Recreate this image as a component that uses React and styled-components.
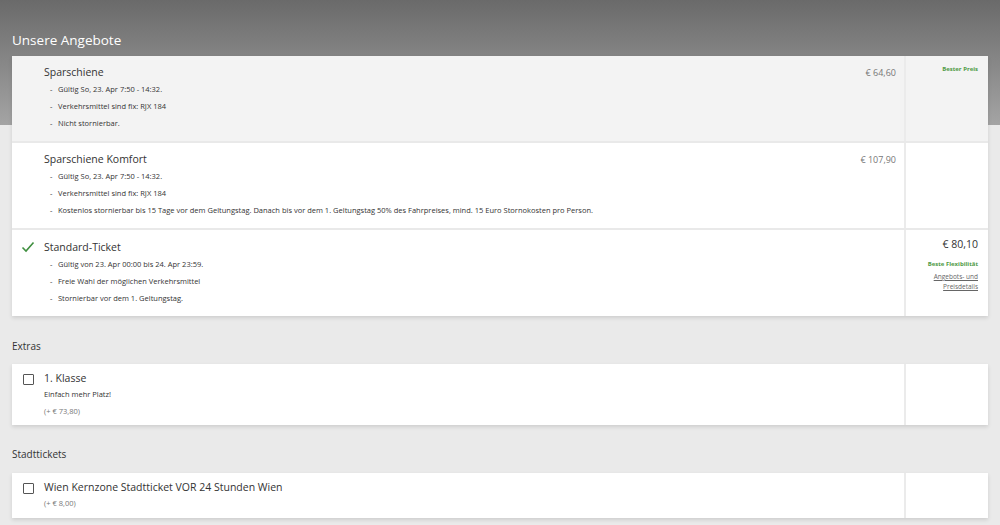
import React from 'react';
import styled, { createGlobalStyle } from 'styled-components';

const GlobalStyle = createGlobalStyle`
  html, body {
    margin: 0;
    padding: 0;
    background: #eaeaea;
    font-family: "Open Sans", "Noto Sans", sans-serif;
    color: #333;
  }
`;

const Page = styled.div`
  min-height: 525px;
  padding: 0 12px 20px 12px;
  background: linear-gradient(180deg, #6a6a6a 0px, #a4a4a4 125px, #eaeaea 125px);
`;

const PageTitle = styled.h1`
  margin: 0;
  padding-top: 30px;
  height: 26px;
  font-size: 13.5px;
  font-weight: 400;
  line-height: 20px;
  color: #fff;
`;

const SectionTitle = styled.h2`
  margin: 0;
  padding-top: ${p => p.$top}px;
  margin-bottom: ${p => p.$bottom}px;
  font-size: 10px;
  font-weight: 400;
  line-height: 16px;
  color: #333;
`;

const Card = styled.div`
  background: #fff;
  box-shadow: 0 2px 4px rgba(0, 0, 0, 0.12);
`;

const Row = styled.div`
  display: grid;
  grid-template-columns: 1fr 82px;
  background: ${p => (p.$muted ? '#f3f3f3' : '#fff')};
  border-bottom: ${p => (p.$last ? 'none' : '2px solid #e9e9e9')};
`;

const Main = styled.div`
  display: grid;
  grid-template-columns: 32px 1fr auto;
  padding: ${p => p.$pad};
  border-right: 2px solid #ebebeb;
`;

const Gutter = styled.div`
  display: flex;
  justify-content: center;
  padding-top: ${p => p.$top || 0}px;
`;

const Body = styled.div`
  min-width: 0;
`;

const Title = styled.div`
  font-size: 10.5px;
  line-height: ${p => p.$lh || 17}px;
  color: #333;
`;

const Bullets = styled.ul`
  margin: 0;
  padding: 0 0 0 6px;
  list-style: none;
`;

const Bullet = styled.li`
  display: flex;
  font-size: 7.5px;
  line-height: 17px;
  color: #333;
  &::before {
    content: '-';
    width: 8px;
  }
`;

const Note = styled.div`
  font-size: 7.5px;
  line-height: 17px;
  color: ${p => (p.$grey ? '#777' : '#333')};
`;

const Price = styled.div`
  padding-right: 8px;
  font-size: 9px;
  line-height: 17px;
  color: #777;
`;

const Side = styled.div`
  padding: ${p => p.$pad || '8px 10px'};
  text-align: right;
`;

const Tag = styled.div`
  font-size: 6px;
  font-weight: 700;
  line-height: 10px;
  color: #4e9a45;
`;

const BigPrice = styled.div`
  font-size: 10.5px;
  line-height: 16px;
  color: #333;
  margin-bottom: 7px;
`;

const DetailsLink = styled.a`
  display: block;
  margin-top: 3px;
  font-size: 6.5px;
  line-height: 10px;
  color: #666;
  text-decoration: underline;
`;

const Box = styled.span`
  width: 9px;
  height: 9px;
  border: 1.3px solid #555;
  border-radius: 1px;
  background: #fff;
`;

const Check = () => (
  <svg width="14" height="12" viewBox="0 0 14 12">
    <polyline points="1.5,6.5 5,10 12.5,1.5" fill="none" stroke="#3f8f3f" strokeWidth="1.6" />
  </svg>
);

const offers = [
  {
    name: 'Sparschiene',
    price: '€ 64,60',
    muted: true,
    tag: 'Bester Preis',
    lines: ['Gültig So, 23. Apr 7:50 - 14:32.', 'Verkehrsmittel sind fix: RJX 184', 'Nicht stornierbar.'],
  },
  {
    name: 'Sparschiene Komfort',
    price: '€ 107,90',
    lines: [
      'Gültig So, 23. Apr 7:50 - 14:32.',
      'Verkehrsmittel sind fix: RJX 184',
      'Kostenlos stornierbar bis 15 Tage vor dem Geltungstag. Danach bis vor dem 1. Geltungstag 50% des Fahrpreises, mind. 15 Euro Stornokosten pro Person.',
    ],
  },
  {
    name: 'Standard-Ticket',
    selected: true,
    bigPrice: '€ 80,10',
    tag: 'Beste Flexibilität',
    details: true,
    lines: ['Gültig von 23. Apr 00:00 bis 24. Apr 23:59.', 'Freie Wahl der möglichen Verkehrsmittel', 'Stornierbar vor dem 1. Geltungstag.'],
  },
];

export default function App() {
  return (
    <>
      <GlobalStyle />
      <Page>
        <PageTitle>Unsere Angebote</PageTitle>
        <Card>
          {offers.map((o, i) => (
            <Row key={o.name} $muted={o.muted} $last={i === offers.length - 1}>
              <Main $pad="8px 0 9px 0">
                <Gutter $top={3}>{o.selected && <Check />}</Gutter>
                <Body>
                  <Title $lh={o.selected ? 18 : 17}>{o.name}</Title>
                  <Bullets>
                    {o.lines.map(l => (
                      <Bullet key={l}>{l}</Bullet>
                    ))}
                  </Bullets>
                </Body>
                <Price>{o.price}</Price>
              </Main>
              <Side $pad={o.bigPrice ? '6px 10px' : '8px 10px'}>
                {o.bigPrice && <BigPrice>{o.bigPrice}</BigPrice>}
                {o.tag && <Tag>{o.tag}</Tag>}
                {o.details && (
                  <DetailsLink href="#">
                    Angebots- und
                    <br />
                    Preisdetails
                  </DetailsLink>
                )}
              </Side>
            </Row>
          ))}
        </Card>

        <SectionTitle $top={22} $bottom={10}>Extras</SectionTitle>
        <Card>
          <Row $last>
            <Main $pad="6px 0 5px 0">
              <Gutter $top={4}><Box /></Gutter>
              <Body>
                <Title $lh={16}>1. Klasse</Title>
                <Note>Einfach mehr Platz!</Note>
                <Note $grey>(+ € 73,80)</Note>
              </Body>
            </Main>
            <Side />
          </Row>
        </Card>

        <SectionTitle $top={21} $bottom={11}>Stadttickets</SectionTitle>
        <Card>
          <Row $last>
            <Main $pad="6px 0 6px 0">
              <Gutter $top={4}><Box /></Gutter>
              <Body>
                <Title $lh={16}>Wien Kernzone Stadtticket VOR 24 Stunden Wien</Title>
                <Note $grey>(+ € 8,00)</Note>
              </Body>
            </Main>
            <Side />
          </Row>
        </Card>
      </Page>
    </>
  );
}
